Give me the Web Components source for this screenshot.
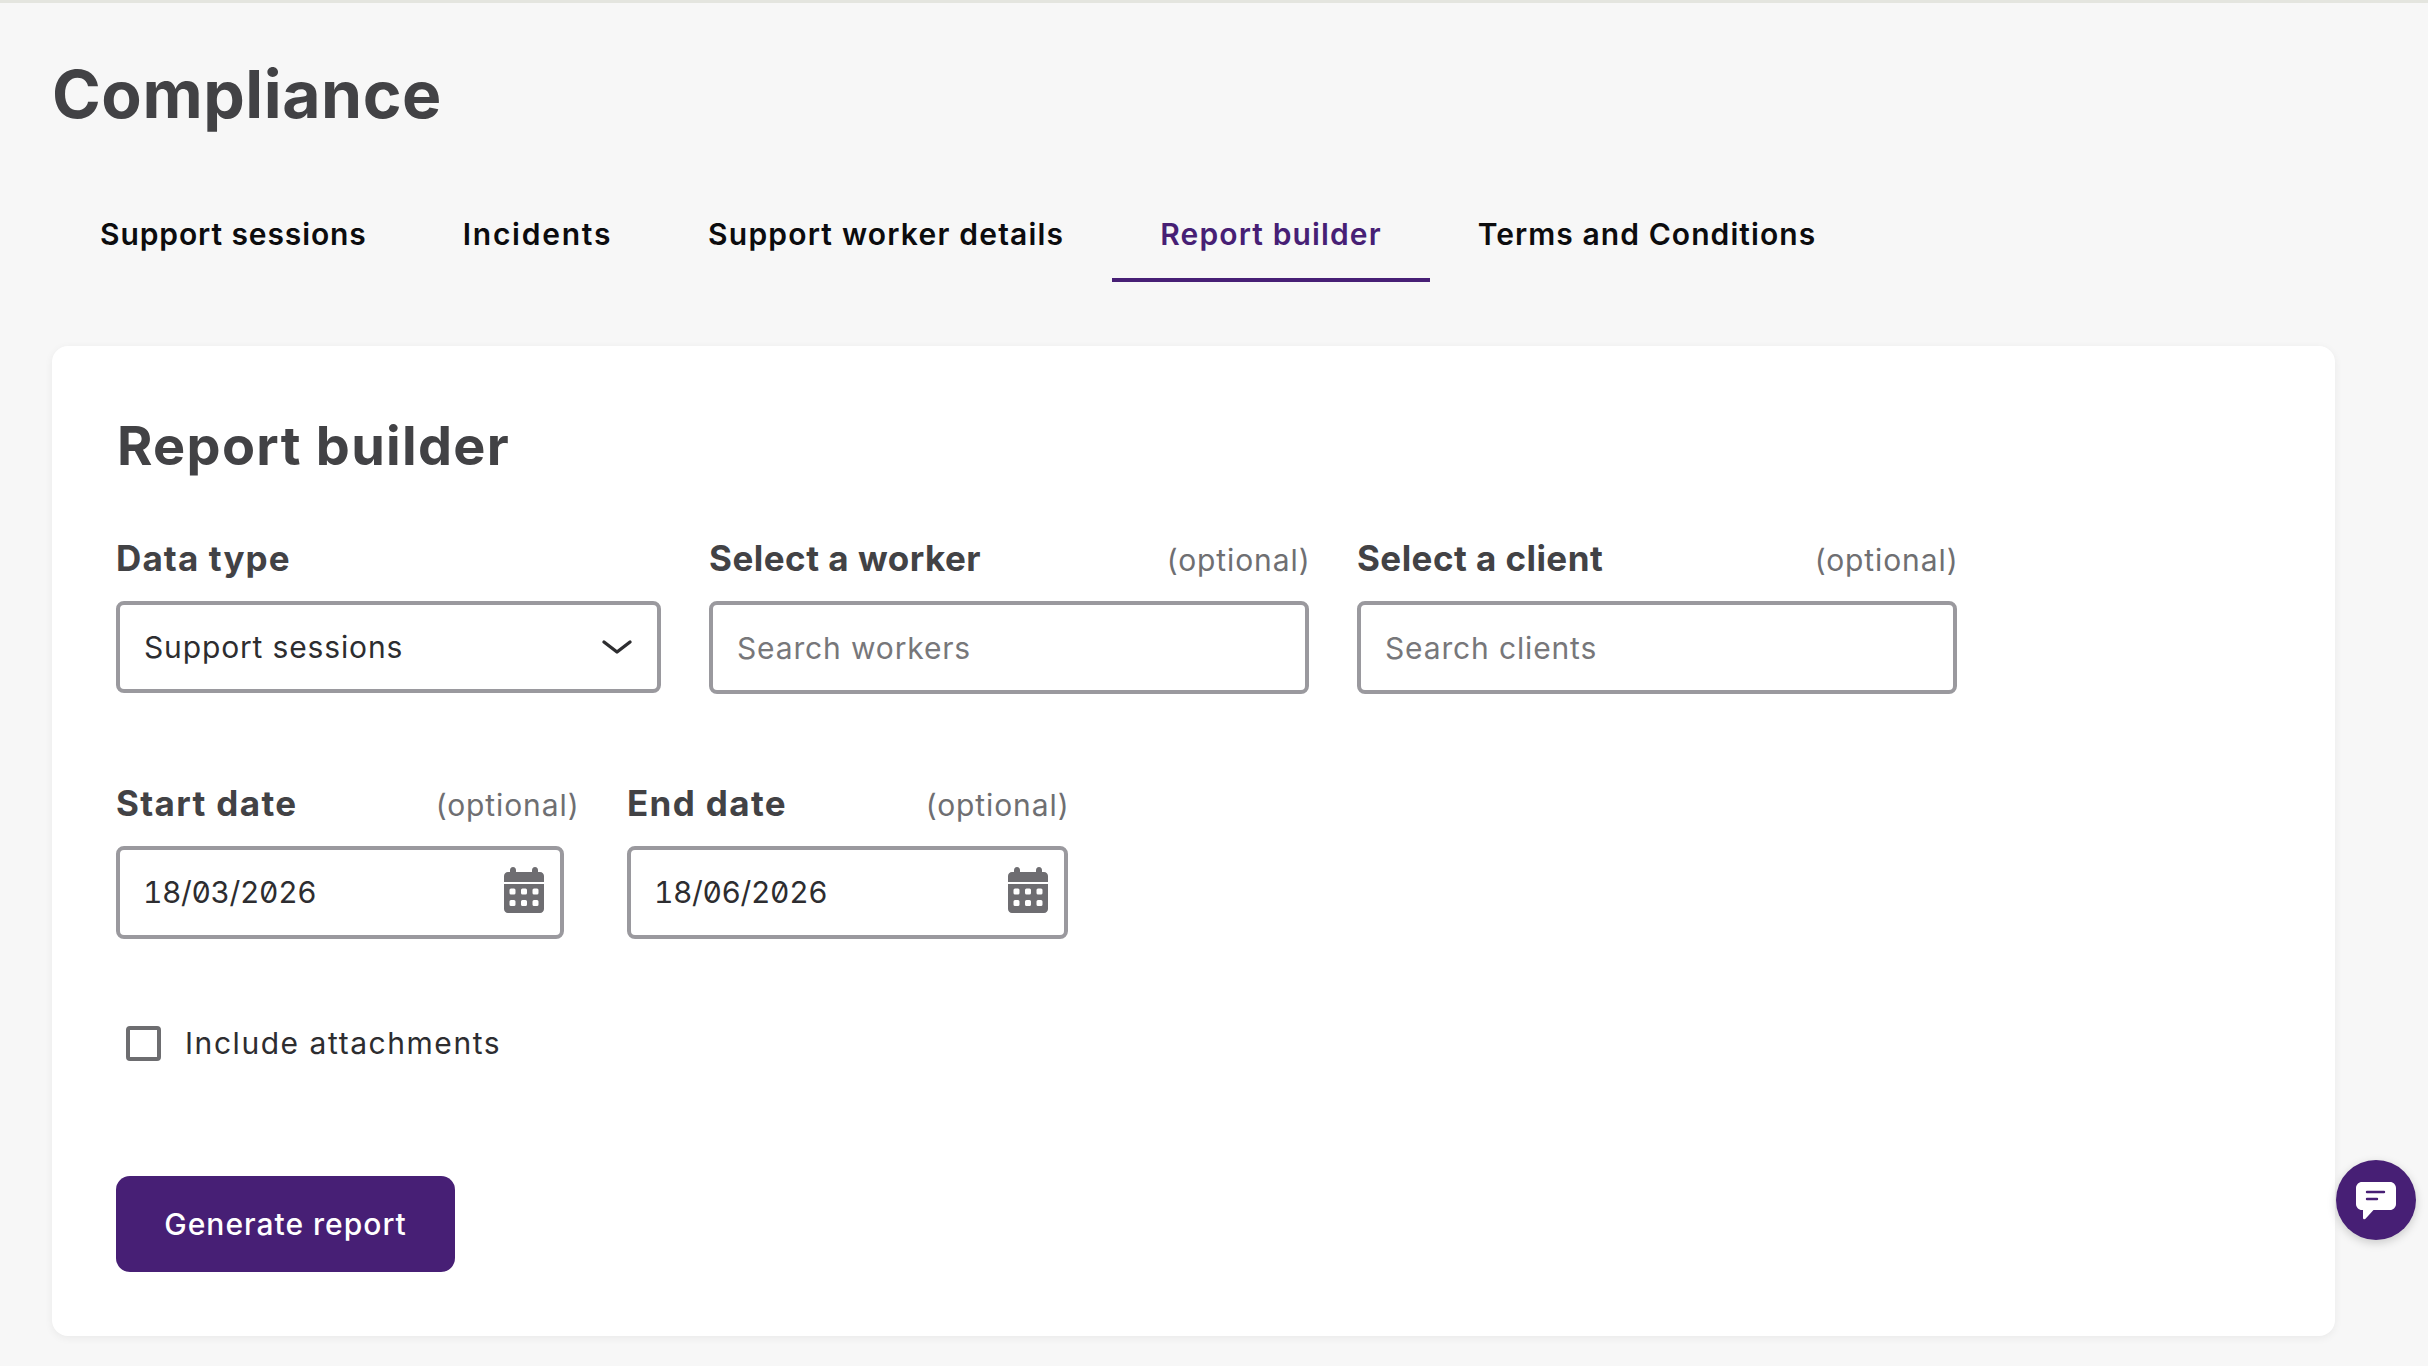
<!DOCTYPE html>
<html lang="en"><head><meta charset="utf-8"><title>Compliance</title>
<style>
html,body{margin:0;background:#f7f7f7;font-family:Inter,"Noto Sans",sans-serif}
body{border-top:3px solid #e4e5df;height:1363px;overflow:hidden}
</style></head><body>
<compliance-page>
  <tab-bar slot="tabs">
    <tab-item style="letter-spacing:.9px">Support sessions</tab-item>
    <tab-item style="letter-spacing:1.75px">Incidents</tab-item>
    <tab-item style="letter-spacing:1.2px">Support worker details</tab-item>
    <tab-item active style="letter-spacing:1.12px">Report builder</tab-item>
    <tab-item style="letter-spacing:1.07px">Terms and Conditions</tab-item>
  </tab-bar>
  <report-card slot="card"></report-card>
</compliance-page>
<chat-fab></chat-fab>
<script>
function def(name, css, html){
  customElements.define(name, class extends HTMLElement{
    constructor(){super();const r=this.attachShadow({mode:'open'});r.innerHTML='<style>'+css+'</style>'+(typeof html==='function'?html(this):html);}
  });
}
const attr=(el,n,d='')=>el.getAttribute(n)??d;

def('compliance-page',`
:host{display:block;padding:0 93px 0 52px;color:#424245}
h1{margin:51px 0 0;font:700 66px/80px Inter,sans-serif;letter-spacing:.55px;color:#424245;height:79px}
.tabs{margin-top:53px}.card{margin-top:64px}
`,`<h1>Compliance</h1><div class="tabs"><slot name="tabs"></slot></div><div class="card"><slot name="card"></slot></div>`);

def('tab-bar',`:host{display:flex}`,`<slot></slot>`);

def('tab-item',`
:host{display:block;box-sizing:border-box;height:96px;padding:26px 48px 0;border-bottom:4px solid transparent;
 font:600 30px/44px Inter,sans-serif;color:#0c0c0e;white-space:nowrap}
:host([active]){color:#471f75;border-bottom-color:#471f75}
`,`<slot></slot>`);

def('form-field',`
:host{display:block;width:var(--w)}
.top{display:flex;justify-content:space-between;align-items:baseline;height:44px;line-height:46px}
.l{font-family:Inter,sans-serif;font-weight:700;font-size:35px;line-height:inherit;letter-spacing:var(--ls,.5px);color:#424245}
.o{font-family:Inter,sans-serif;font-weight:400;font-size:30px;line-height:inherit;letter-spacing:.9px;color:#6f6f72;margin-right:-1.5px}
.c{margin-top:22px}
`,el=>`<div class="top"><span class="l">${attr(el,'label')}</span>${el.hasAttribute('optional')?'<span class="o">(optional)</span>':''}</div><div class="c"><slot></slot></div>`);

const boxCss=`
:host{display:flex;box-sizing:border-box;align-items:center;justify-content:space-between;height:93px;width:var(--w,100%);padding:0 20px 0 24px;
 border:4px solid #9a999e;border-radius:8px;background:#fff;font:400 30px/40px Inter,sans-serif;letter-spacing:.85px;color:#2d2d30}
`;
def('select-box',boxCss+`:host{margin-top:1px;height:92px;padding-right:24px}`,el=>`<span><slot></slot></span>
<svg width="32" height="16" viewBox="0 0 32 16" fill="none" stroke="#2d2d30" stroke-width="3.4" stroke-linecap="round" stroke-linejoin="round"><path d="M3 3 L16 13 L29 3"/></svg>`);
def('search-box',boxCss+`:host{color:#77777a;padding-left:24px}`,`<slot></slot>`);
def('date-box',boxCss+`:host{letter-spacing:-.4px;font-feature-settings:"zero","tnum";padding:0 16px 0 23px} span{margin-top:-1px} svg{margin-top:-5px}`,
`<span><slot></slot></span>
<svg width="40" height="46" viewBox="0 0 40 46" fill="#6e6d71"><path d="M9 0c2 0 3 1.400 3 3.500V5h16V3.500C28 1.400 29 0 31 0s3 1.400 3 3.500V5h2c2.300 0 4 1.700 4 4v6H0V9c0-2.300 1.700-4 4-4h2V3.500C6 1.400 7 0 9 0Z"/><path fill-rule="evenodd" d="M0 17h40v25c0 2.300-1.700 4-4 4H4c-2.300 0-4-1.700-4-4V17Zm7 4.500a1.500 1.500 0 0 0-1.500 1.500v3A1.500 1.500 0 0 0 7 27.500h3a1.500 1.500 0 0 0 1.500-1.500v-3A1.500 1.500 0 0 0 10 21.500H7Zm11.500 0A1.500 1.500 0 0 0 17 23v3a1.500 1.500 0 0 0 1.500 1.500h3A1.500 1.500 0 0 0 23 26v-3a1.500 1.500 0 0 0-1.500-1.500h-3Zm11.500 0a1.500 1.500 0 0 0-1.500 1.500v3a1.500 1.500 0 0 0 1.500 1.500h3a1.500 1.500 0 0 0 1.500-1.500v-3a1.500 1.500 0 0 0-1.500-1.500h-3ZM7 33a1.500 1.500 0 0 0-1.500 1.500v3A1.500 1.500 0 0 0 7 39h3a1.500 1.500 0 0 0 1.500-1.500v-3A1.500 1.500 0 0 0 10 33H7Zm11.500 0a1.500 1.500 0 0 0-1.500 1.500v3a1.500 1.500 0 0 0 1.500 1.500h3a1.500 1.500 0 0 0 1.500-1.500v-3a1.500 1.500 0 0 0-1.500-1.500h-3ZM30 33a1.500 1.500 0 0 0-1.500 1.500v3A1.500 1.500 0 0 0 30 39h3a1.500 1.500 0 0 0 1.500-1.500v-3A1.500 1.500 0 0 0 33 33h-3Z"/></svg>`);

def('check-row',`
:host{display:flex;align-items:center;gap:24px;padding-left:10px;height:34px;font:400 30px/40px Inter,sans-serif;letter-spacing:1.55px;color:#2d2d30}
i{display:block;box-sizing:border-box;width:35px;height:35px;border:4px solid #6d6d70;border-radius:4px;background:#fff}
`,`<i></i><span><slot></slot></span>`);

def('primary-button',`
:host{display:inline-flex;align-items:center;justify-content:center;box-sizing:border-box;width:339px;height:96px;border-radius:14px;background:#471f75;color:#fff;
 font:500 30px/40px Inter,sans-serif;letter-spacing:1px}
`,`<slot></slot>`);

def('report-card',`
:host{display:block;box-sizing:border-box;background:#fff;border-radius:16px;box-shadow:0 2px 8px rgba(0,0,0,.06);padding:68px 64px 64px}
h2{margin:0 0 0 1px;font:700 54px/64px Inter,sans-serif;letter-spacing:1.3px;color:#424245}
.row{display:flex}
.r1{margin-top:57px;gap:48px}
.r2{margin-top:86px;gap:49px}
.chk{margin-top:87px}
.btn{margin-top:116px;display:flex}
`,`<h2>Report builder</h2>
<div class="row r1">
  <form-field label="Data type" style="--w:545px;--ls:1.1px"><select-box>Support sessions</select-box></form-field>
  <form-field label="Select a worker" optional style="--w:600px;--ls:.5px"><search-box>Search workers</search-box></form-field>
  <form-field label="Select a client" optional style="--w:600px;--ls:.45px"><search-box>Search clients</search-box></form-field>
</div>
<div class="row r2">
  <form-field label="Start date" optional style="--w:462px;--ls:1.35px"><date-box style="--w:448px">18/03/2026</date-box></form-field>
  <form-field label="End date" optional style="--w:441px;--ls:1.35px"><date-box>18/06/2026</date-box></form-field>
</div>
<div class="chk"><check-row>Include attachments</check-row></div>
<div class="btn"><primary-button>Generate report</primary-button></div>`);

def('chat-fab',`
:host{position:fixed;left:2336px;top:1160px;width:80px;height:80px;border-radius:50%;background:#471f75;box-shadow:0 3px 10px rgba(0,0,0,.18);display:flex;align-items:center;justify-content:center}
svg{display:block}
`,`<svg width="40" height="40" viewBox="0 0 40 40"><path fill="#fff" d="M6 2h28c3.300 0 6 2.700 6 6v16c0 3.300-2.700 6-6 6H17.500L9.500 38.800c-.8.700-2.500.400-2.500-.9V30H6c-3.300 0-6-2.700-6-6V8c0-3.300 2.700-6 6-6Z"/><path d="M11 12h17M11 19h10" stroke="#471f75" stroke-width="2.400" stroke-linecap="round" fill="none"/></svg>`);
</script>
</body></html>
